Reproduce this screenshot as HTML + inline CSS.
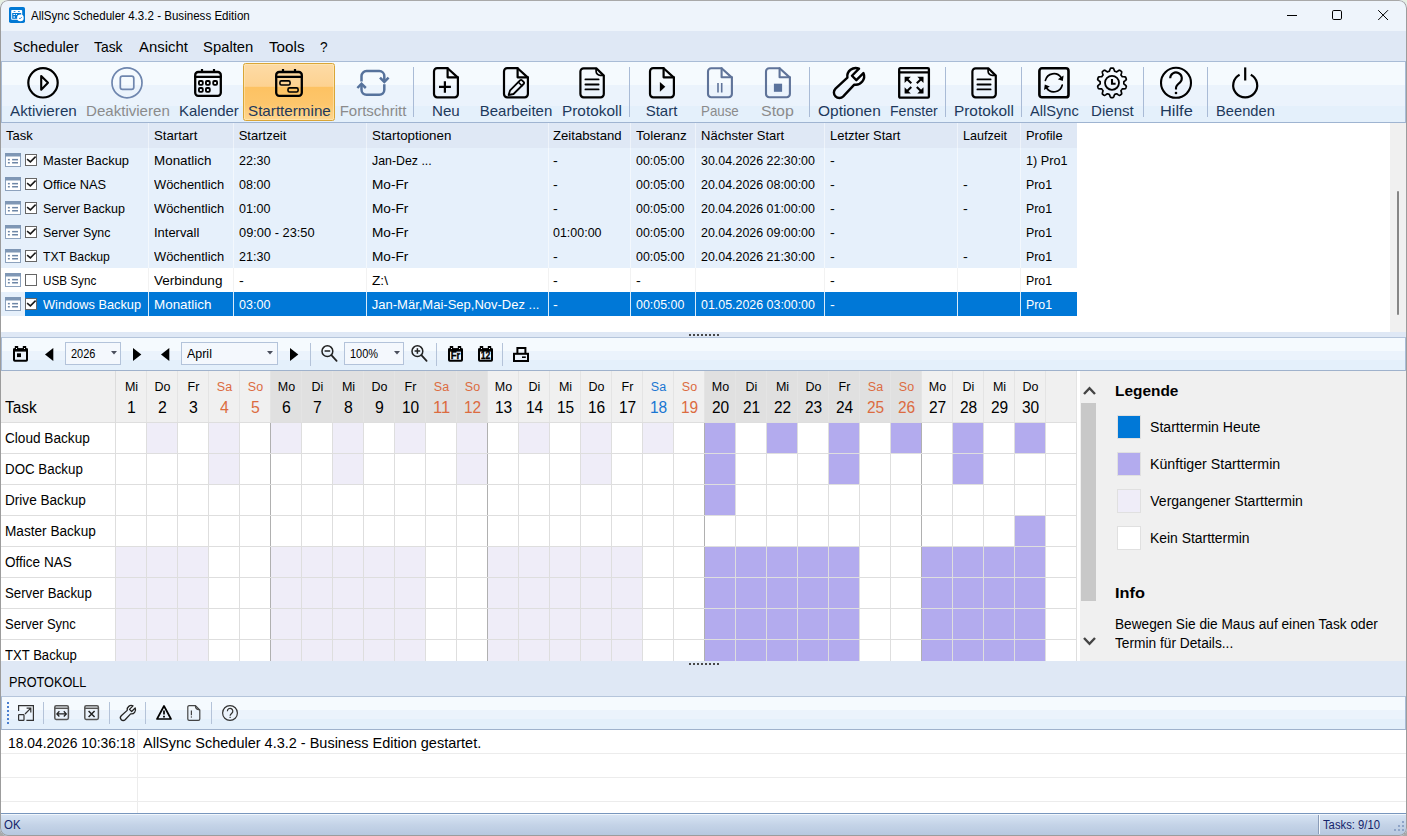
<!DOCTYPE html>
<html lang="de"><head><meta charset="utf-8"><title>AllSync Scheduler 4.3.2 - Business Edition</title>
<style>
html,body{margin:0;padding:0;background:linear-gradient(#e6efe1 0,#e6efe1 50%,#a9a9a9 50%,#a9a9a9 100%);}
body{width:1407px;height:836px;overflow:hidden;font-family:"Liberation Sans",sans-serif;}
#win{position:absolute;left:0;top:0;width:1407px;height:836px;overflow:hidden;background:#dfe8f5;border-radius:8px;}
.t{position:absolute;white-space:pre;line-height:1;transform-origin:0 50%;font-family:"Liberation Sans",sans-serif;}
div{box-sizing:border-box;}
svg{position:absolute;overflow:visible;}

</style></head>
<body>
<div id="win">

<!-- title bar -->
<div style="position:absolute;left:0px;top:0px;width:1407px;height:31px;background:#eef4fb;"></div><svg style="left:9px;top:7px" width="16" height="16" viewBox="0 0 16 16"><rect x="0" y="0" width="16" height="16" rx="1.8" fill="#0078d4"/><rect x="2.2" y="3" width="11" height="9.8" rx="0.8" fill="#fff"/><rect x="3.2" y="6" width="9" height="5.8" fill="#0078d4"/><rect x="4.6" y="4" width="1.8" height="0.9" fill="#2b8be0"/><rect x="9" y="4" width="1.8" height="0.9" fill="#2b8be0"/><rect x="4.4" y="7" width="1.6" height="1" fill="#fff"/><rect x="6.8" y="7" width="1.2" height="1" fill="#fff"/><rect x="4.4" y="9" width="1.6" height="2" fill="#9cc8f0"/><circle cx="11.4" cy="10.9" r="3.3" fill="#fff"/><path d="M10 11l1 0.9l1.8-1.9" fill="none" stroke="#2b8be0" stroke-width="0.9"/></svg><svg style="left:1287px;top:15px" width="10" height="1" viewBox="0 0 10 1"><rect x="0" y="0" width="10" height="1" fill="#000"/></svg><svg style="left:1332px;top:10px" width="10" height="10" viewBox="0 0 10 10"><rect x="0.5" y="0.5" width="9" height="9" rx="1.3" fill="none" stroke="#000" stroke-width="1"/></svg><svg style="left:1378px;top:10px" width="10" height="10" viewBox="0 0 10 10"><path d="M0.2 0.2L10 10M10 0.2L0.2 10" fill="none" stroke="#000" stroke-width="1"/></svg>
<!-- menu bar -->
<div style="position:absolute;left:0px;top:31px;width:1407px;height:31px;background:#dfe8f5;"></div>
<!-- toolbar -->
<div style="position:absolute;left:1px;top:61px;width:1405px;height:62px;border:1px solid #a9bcd6;border-bottom-color:#9fb4d1;background:linear-gradient(#f5fafe 0,#f5fafe 23px,#ebf3fc 23px,#ebf3fc 44px,#e4f0fb 44px,#e4f0fb 100%);"></div><div style="position:absolute;left:243px;top:63px;width:92px;height:58px;border:1px solid #d9a537;border-radius:2.5px;box-shadow:inset 0 0 0 1px rgba(255,236,190,0.55);background:linear-gradient(#fddba6 0,#fdd291 40%,#fdc262 41%,#fdc66c 72%,#fed791 100%);"></div><div style="position:absolute;left:413px;top:67px;width:1px;height:50px;background:#a9bbd6;"></div><div style="position:absolute;left:629px;top:67px;width:1px;height:50px;background:#a9bbd6;"></div><div style="position:absolute;left:809px;top:67px;width:1px;height:50px;background:#a9bbd6;"></div><div style="position:absolute;left:945px;top:67px;width:1px;height:50px;background:#a9bbd6;"></div><div style="position:absolute;left:1021px;top:67px;width:1px;height:50px;background:#a9bbd6;"></div><div style="position:absolute;left:1143px;top:67px;width:1px;height:50px;background:#a9bbd6;"></div><div style="position:absolute;left:1207px;top:67px;width:1px;height:50px;background:#a9bbd6;"></div><svg style="left:27px;top:67px" width="32" height="32" viewBox="0 0 32 32"><circle cx="16" cy="15.8" r="14.7" fill="none" stroke="#000" stroke-width="2.2" stroke-linecap="round" stroke-linejoin="round"/><path d="M14.2 9V22.7L21 15.8Z" fill="none" stroke="#000" stroke-width="2.1" stroke-linecap="round" stroke-linejoin="round"/></svg><svg style="left:111px;top:67px" width="32" height="32" viewBox="0 0 32 32"><circle cx="16" cy="15.8" r="15" fill="none" stroke="#6f86ae" stroke-width="1.7" stroke-linecap="round" stroke-linejoin="round"/><rect x="9.3" y="9.2" width="13.5" height="13.2" rx="2.2" fill="none" stroke="#6f86ae" stroke-width="1.7" stroke-linecap="round" stroke-linejoin="round"/></svg><svg style="left:192px;top:67px" width="32" height="32" viewBox="0 0 32 32"><rect x="3.2" y="5" width="25.6" height="23.8" rx="3" fill="none" stroke="#000" stroke-width="2.3" stroke-linecap="round" stroke-linejoin="round"/><path d="M3.2 9.8H28.8" fill="none" stroke="#000" stroke-width="2.2" stroke-linecap="round" stroke-linejoin="round"/><path d="M10 2V5M22 2V5" fill="none" stroke="#000" stroke-width="2.2" stroke-linecap="butt" stroke-linejoin="round"/><rect x="6.95" y="14.05" width="3.8" height="3.8" rx="1" fill="none" stroke="#000" stroke-width="1.9" stroke-linecap="round" stroke-linejoin="round"/><rect x="13.95" y="14.05" width="3.8" height="3.8" rx="1" fill="none" stroke="#000" stroke-width="1.9" stroke-linecap="round" stroke-linejoin="round"/><rect x="21.25" y="14.05" width="3.8" height="3.8" rx="1" fill="none" stroke="#000" stroke-width="1.9" stroke-linecap="round" stroke-linejoin="round"/><rect x="6.95" y="21.05" width="3.8" height="3.8" rx="1" fill="none" stroke="#000" stroke-width="1.9" stroke-linecap="round" stroke-linejoin="round"/><rect x="13.95" y="21.05" width="3.8" height="3.8" rx="1" fill="none" stroke="#000" stroke-width="1.9" stroke-linecap="round" stroke-linejoin="round"/></svg><svg style="left:273px;top:67px" width="32" height="32" viewBox="0 0 32 32"><rect x="3.2" y="5" width="25.6" height="23.8" rx="3" fill="none" stroke="#000" stroke-width="2.3" stroke-linecap="round" stroke-linejoin="round"/><path d="M3.2 9.8H28.8" fill="none" stroke="#000" stroke-width="2.2" stroke-linecap="round" stroke-linejoin="round"/><path d="M10 2V5M22 2V5" fill="none" stroke="#000" stroke-width="2.2" stroke-linecap="butt" stroke-linejoin="round"/><rect x="6.9" y="13.9" width="10.2" height="4.1" rx="1.5" fill="none" stroke="#000" stroke-width="1.6" stroke-linecap="round" stroke-linejoin="round"/><rect x="15" y="20.9" width="10.1" height="4.1" rx="1.5" fill="none" stroke="#000" stroke-width="1.6" stroke-linecap="round" stroke-linejoin="round"/></svg><svg style="left:357px;top:67px" width="32" height="32" viewBox="0 0 32 32"><path d="M4.5 14.6V9.1a5 5 0 0 1 5-5H22.3a5 5 0 0 1 5 5V14.5" fill="none" stroke="#56729c" stroke-width="2.5" stroke-linecap="butt" stroke-linejoin="miter"/><path d="M23 10.7L27.3 15L31.6 10.7" fill="none" stroke="#56729c" stroke-width="2.5" stroke-linecap="butt" stroke-linejoin="miter"/><path d="M27.3 17.2V22.8a5 5 0 0 1-5 5H9.5a5 5 0 0 1-5-5V17" fill="none" stroke="#56729c" stroke-width="2.5" stroke-linecap="butt" stroke-linejoin="miter"/><path d="M0.4 21L4.5 16.8L8.8 21" fill="none" stroke="#56729c" stroke-width="2.5" stroke-linecap="butt" stroke-linejoin="miter"/></svg><svg style="left:430px;top:67px" width="32" height="32" viewBox="0 0 32 32"><path d="M7.2 1.2H17.6L27.9 10.600000000000001V27.1a3.2 3.2 0 0 1 -3.2 3.2H7.2a3.2 3.2 0 0 1 -3.2 -3.2V4.4a3.2 3.2 0 0 1 3.2 -3.2Z" fill="none" stroke="#000" stroke-width="2.2" stroke-linecap="round" stroke-linejoin="round"/><path d="M17.6 1.2V10.3H27.9" fill="none" stroke="#000" stroke-width="2.2" stroke-linecap="round" stroke-linejoin="round"/><path d="M9 19.8H20.9M14.9 14.2V25.7" fill="none" stroke="#000" stroke-width="2.2" stroke-linecap="butt" stroke-linejoin="round"/></svg><svg style="left:500px;top:67px" width="32" height="32" viewBox="0 0 32 32"><path d="M7.2 1.2H17.6L27.9 10.600000000000001V27.1a3.2 3.2 0 0 1 -3.2 3.2H7.2a3.2 3.2 0 0 1 -3.2 -3.2V4.4a3.2 3.2 0 0 1 3.2 -3.2Z" fill="none" stroke="#000" stroke-width="2.2" stroke-linecap="round" stroke-linejoin="round"/><path d="M17.6 1.2V10.3H27.9" fill="none" stroke="#000" stroke-width="2.2" stroke-linecap="round" stroke-linejoin="round"/><path d="M8.6 28l1.5-4.7L20 13.4a1.5 1.5 0 0 1 2.1 0l1.5 1.5a1.5 1.5 0 0 1 0 2.1L13.5 27Z" fill="#f2f7fd" stroke="#000" stroke-width="1.8" stroke-linejoin="round"/><path d="M18.4 15.2l3.5 3.5" fill="none" stroke="#000" stroke-width="1.6" stroke-linecap="round" stroke-linejoin="round"/></svg><svg style="left:576.3px;top:67px" width="32" height="32" viewBox="0 0 32 32"><path d="M7.6000000000000005 1.3H20.3L27.8 8.6V27.1a3.2 3.2 0 0 1 -3.2 3.2H7.6000000000000005a3.2 3.2 0 0 1 -3.2 -3.2V4.5a3.2 3.2 0 0 1 3.2 -3.2Z" fill="none" stroke="#000" stroke-width="2.2" stroke-linecap="round" stroke-linejoin="round"/><path d="M20.1 1.6V4.2a4.2 4.2 0 0 0 4.2 4.2H27.4" fill="none" stroke="#000" stroke-width="1.7" stroke-linecap="round" stroke-linejoin="round"/><path d="M9.4 12.4H22.6M9.4 17.5H22.6M9.4 22.4H22.6" fill="none" stroke="#000" stroke-width="1.8" stroke-linecap="round" stroke-linejoin="round"/></svg><svg style="left:646px;top:67px" width="32" height="32" viewBox="0 0 32 32"><path d="M7.2 1.2H17.6L27.9 10.600000000000001V27.1a3.2 3.2 0 0 1 -3.2 3.2H7.2a3.2 3.2 0 0 1 -3.2 -3.2V4.4a3.2 3.2 0 0 1 3.2 -3.2Z" fill="none" stroke="#000" stroke-width="2.2" stroke-linecap="round" stroke-linejoin="round"/><path d="M17.6 1.2V10.3H27.9" fill="none" stroke="#000" stroke-width="2.2" stroke-linecap="round" stroke-linejoin="round"/><path d="M13.9 14.9V24.8L19.3 19.8Z" fill="#000"/></svg><svg style="left:704.3px;top:67px" width="32" height="32" viewBox="0 0 32 32"><path d="M7.2 1.2H17.6L27.9 10.600000000000001V27.1a3.2 3.2 0 0 1 -3.2 3.2H7.2a3.2 3.2 0 0 1 -3.2 -3.2V4.4a3.2 3.2 0 0 1 3.2 -3.2Z" fill="none" stroke="#5f7399" stroke-width="2.1" stroke-linecap="round" stroke-linejoin="round"/><path d="M17.6 1.2V10.3H27.9" fill="none" stroke="#5f7399" stroke-width="2.1" stroke-linecap="round" stroke-linejoin="round"/><path d="M14 16.1V25.5M17.7 16.1V25.5" fill="none" stroke="#5f7399" stroke-width="1.6" stroke-linecap="butt" stroke-linejoin="round"/></svg><svg style="left:762px;top:67px" width="32" height="32" viewBox="0 0 32 32"><path d="M7.2 1.2H17.6L27.9 10.600000000000001V27.1a3.2 3.2 0 0 1 -3.2 3.2H7.2a3.2 3.2 0 0 1 -3.2 -3.2V4.4a3.2 3.2 0 0 1 3.2 -3.2Z" fill="none" stroke="#5f7399" stroke-width="2.1" stroke-linecap="round" stroke-linejoin="round"/><path d="M17.6 1.2V10.3H27.9" fill="none" stroke="#5f7399" stroke-width="2.1" stroke-linecap="round" stroke-linejoin="round"/><rect x="11.9" y="16.7" width="8.2" height="8.1" fill="#5a729c"/></svg><svg style="left:833px;top:67px" width="32" height="32" viewBox="0 0 32 32"><path d="M26.03 1.69L18.95 8.76L23.34 13.15L30.41 6.07A8.4 8.4 0 0 1 21.29 17.68L10.27 29.41A5.5 5.5 0 0 1 2.53 21.59L14.40 10.71A8.4 8.4 0 0 1 26.03 1.69Z" fill="none" stroke="#000" stroke-width="2.4" stroke-linecap="round" stroke-linejoin="round"/></svg><svg style="left:898px;top:67px" width="32" height="32" viewBox="0 0 32 32"><rect x="1.2" y="1.2" width="29.7" height="29.5" rx="1" fill="none" stroke="#000" stroke-width="2.3" stroke-linecap="round" stroke-linejoin="round"/><path d="M1.2 5.3H30.9" fill="none" stroke="#000" stroke-width="2.2" stroke-linecap="round" stroke-linejoin="round"/><g transform="translate(6.8,10) scale(1,1)"><path d="M6.5 6.3L0.8 0.8" fill="none" stroke="#000" stroke-width="2.1" stroke-linecap="butt" stroke-linejoin="round"/><path d="M-0.2 -0.2H6L-0.2 6Z" fill="#000"/></g><g transform="translate(25.3,10) scale(-1,1)"><path d="M6.5 6.3L0.8 0.8" fill="none" stroke="#000" stroke-width="2.1" stroke-linecap="butt" stroke-linejoin="round"/><path d="M-0.2 -0.2H6L-0.2 6Z" fill="#000"/></g><g transform="translate(6.8,26.2) scale(1,-1)"><path d="M6.5 6.3L0.8 0.8" fill="none" stroke="#000" stroke-width="2.1" stroke-linecap="butt" stroke-linejoin="round"/><path d="M-0.2 -0.2H6L-0.2 6Z" fill="#000"/></g><g transform="translate(25.3,26.2) scale(-1,-1)"><path d="M6.5 6.3L0.8 0.8" fill="none" stroke="#000" stroke-width="2.1" stroke-linecap="butt" stroke-linejoin="round"/><path d="M-0.2 -0.2H6L-0.2 6Z" fill="#000"/></g></svg><svg style="left:968px;top:67px" width="32" height="32" viewBox="0 0 32 32"><path d="M7.6000000000000005 1.3H20.3L27.8 8.6V27.1a3.2 3.2 0 0 1 -3.2 3.2H7.6000000000000005a3.2 3.2 0 0 1 -3.2 -3.2V4.5a3.2 3.2 0 0 1 3.2 -3.2Z" fill="none" stroke="#000" stroke-width="2.2" stroke-linecap="round" stroke-linejoin="round"/><path d="M20.1 1.6V4.2a4.2 4.2 0 0 0 4.2 4.2H27.4" fill="none" stroke="#000" stroke-width="1.7" stroke-linecap="round" stroke-linejoin="round"/><path d="M9.4 12.4H22.6M9.4 17.5H22.6M9.4 22.4H22.6" fill="none" stroke="#000" stroke-width="1.8" stroke-linecap="round" stroke-linejoin="round"/></svg><svg style="left:1038px;top:67px" width="32" height="32" viewBox="0 0 32 32"><rect x="1.4" y="1.3" width="29.1" height="29" rx="2.6" fill="none" stroke="#000" stroke-width="2.6" stroke-linecap="round" stroke-linejoin="round"/><path d="M7.4 13.4a8.7 8.7 0 0 1 15.8-2.6M24.2 18.2a8.7 8.7 0 0 1-15.8 2.6" fill="none" stroke="#000" stroke-width="1.7" stroke-linecap="round" stroke-linejoin="round"/><path d="M25.6 8.6L24.8 14L19.8 12.2Z" fill="#000"/><path d="M6 23L6.8 17.6L11.8 19.4Z" fill="#000"/></svg><svg style="left:1096px;top:67px" width="32" height="32" viewBox="0 0 32 32"><path d="M16.00 1.05L16.39 1.06L16.77 1.07L17.16 1.10L17.51 1.42L17.81 2.02L18.08 2.66L18.31 3.31L18.52 3.93L18.77 4.28L19.07 4.35L19.37 4.44L19.66 4.53L19.96 4.63L20.25 4.74L20.53 4.85L20.94 4.71L21.47 4.34L22.04 3.95L22.63 3.58L23.23 3.28L23.71 3.22L24.03 3.43L24.35 3.64L24.67 3.87L24.98 4.10L25.28 4.34L25.58 4.58L25.68 5.05L25.57 5.72L25.40 6.40L25.21 7.06L25.02 7.68L25.01 8.10L25.21 8.34L25.40 8.59L25.59 8.83L25.77 9.09L25.94 9.35L26.10 9.61L26.51 9.73L27.16 9.74L27.85 9.76L28.55 9.82L29.21 9.92L29.63 10.16L29.77 10.51L29.90 10.88L30.03 11.24L30.14 11.61L30.25 11.98L30.34 12.36L30.14 12.79L29.67 13.27L29.14 13.72L28.59 14.14L28.07 14.53L27.81 14.87L27.83 15.18L27.85 15.49L27.85 15.80L27.85 16.11L27.83 16.42L27.81 16.73L28.07 17.07L28.59 17.46L29.14 17.88L29.67 18.33L30.14 18.81L30.34 19.24L30.25 19.62L30.14 19.99L30.03 20.36L29.90 20.72L29.77 21.09L29.63 21.44L29.21 21.68L28.55 21.78L27.85 21.84L27.16 21.86L26.51 21.87L26.10 21.99L25.94 22.25L25.77 22.51L25.59 22.77L25.40 23.01L25.21 23.26L25.01 23.50L25.02 23.92L25.21 24.54L25.40 25.20L25.57 25.88L25.68 26.55L25.58 27.02L25.28 27.26L24.98 27.50L24.67 27.73L24.35 27.96L24.03 28.17L23.71 28.38L23.23 28.32L22.63 28.02L22.04 27.65L21.47 27.26L20.94 26.89L20.53 26.75L20.25 26.86L19.96 26.97L19.66 27.07L19.37 27.16L19.07 27.25L18.77 27.32L18.52 27.67L18.31 28.29L18.08 28.94L17.81 29.58L17.51 30.18L17.16 30.50L16.77 30.53L16.39 30.54L16.00 30.55L15.61 30.54L15.23 30.53L14.84 30.50L14.49 30.18L14.19 29.58L13.92 28.94L13.69 28.29L13.48 27.67L13.23 27.32L12.93 27.25L12.63 27.16L12.34 27.07L12.04 26.97L11.75 26.86L11.47 26.75L11.06 26.89L10.53 27.26L9.96 27.65L9.37 28.02L8.77 28.32L8.29 28.38L7.97 28.17L7.65 27.96L7.33 27.73L7.02 27.50L6.72 27.26L6.42 27.02L6.32 26.55L6.43 25.88L6.60 25.20L6.79 24.54L6.98 23.92L6.99 23.50L6.79 23.26L6.60 23.01L6.41 22.77L6.23 22.51L6.06 22.25L5.90 21.99L5.49 21.87L4.84 21.86L4.15 21.84L3.45 21.78L2.79 21.68L2.37 21.44L2.23 21.09L2.10 20.72L1.97 20.36L1.86 19.99L1.75 19.62L1.66 19.24L1.86 18.81L2.33 18.33L2.86 17.88L3.41 17.46L3.93 17.07L4.19 16.73L4.17 16.42L4.15 16.11L4.15 15.80L4.15 15.49L4.17 15.18L4.19 14.87L3.93 14.53L3.41 14.14L2.86 13.72L2.33 13.27L1.86 12.79L1.66 12.36L1.75 11.98L1.86 11.61L1.97 11.24L2.10 10.88L2.23 10.51L2.37 10.16L2.79 9.92L3.45 9.82L4.15 9.76L4.84 9.74L5.49 9.73L5.90 9.61L6.06 9.35L6.23 9.09L6.41 8.83L6.60 8.59L6.79 8.34L6.99 8.10L6.98 7.68L6.79 7.06L6.60 6.40L6.43 5.72L6.32 5.05L6.42 4.58L6.72 4.34L7.02 4.10L7.33 3.87L7.65 3.64L7.97 3.43L8.29 3.22L8.77 3.28L9.37 3.58L9.96 3.95L10.53 4.34L11.06 4.71L11.47 4.85L11.75 4.74L12.04 4.63L12.34 4.53L12.63 4.44L12.93 4.35L13.23 4.28L13.48 3.93L13.69 3.31L13.92 2.66L14.19 2.02L14.49 1.42L14.84 1.10L15.23 1.07L15.61 1.06Z" fill="none" stroke="#000" stroke-width="1.7" stroke-linecap="round" stroke-linejoin="round"/><circle cx="16" cy="15.8" r="7" fill="none" stroke="#000" stroke-width="1.8" stroke-linecap="round" stroke-linejoin="round"/><path d="M16 12V16.8H19.6" fill="none" stroke="#000" stroke-width="2.1" stroke-linecap="butt" stroke-linejoin="miter"/></svg><svg style="left:1160px;top:67px" width="32" height="32" viewBox="0 0 32 32"><circle cx="16" cy="15.8" r="15" fill="none" stroke="#000" stroke-width="2.1" stroke-linecap="round" stroke-linejoin="round"/><path d="M10.2 11.2a5.8 5.8 0 1 1 9.6 4.4c-2.4 1.9-3.8 3-3.8 5.4V22.4" fill="none" stroke="#000" stroke-width="2.1" stroke-linecap="butt" stroke-linejoin="round"/><circle cx="16" cy="26" r="1.3" fill="#000"/></svg><svg style="left:1229px;top:67px" width="32" height="32" viewBox="0 0 32 32"><path d="M16.2 0.4V13.5" fill="none" stroke="#000" stroke-width="2.2" stroke-linecap="butt" stroke-linejoin="round"/><path d="M10.6 7.8a12 12 0 1 0 11.2 0" fill="none" stroke="#000" stroke-width="2.2" stroke-linecap="butt" stroke-linejoin="round"/></svg>
<!-- task table -->
<div style="position:absolute;left:1px;top:123px;width:1389px;height:209px;background:#fff;"></div><div style="position:absolute;left:1390px;top:123px;width:16px;height:209px;background:#f0f0f0;"></div><div style="position:absolute;left:1397px;top:191px;width:2px;height:124px;background:#868686;border-radius:1px;"></div><div style="position:absolute;left:1px;top:123px;width:1076px;height:25px;background:#dfe8f5;"></div><div style="position:absolute;left:1px;top:148px;width:1076px;height:120px;background:#e6f0fb;"></div><div style="position:absolute;left:1px;top:292px;width:24px;height:24px;background:#e6f0fb;"></div><div style="position:absolute;left:25px;top:292px;width:1052px;height:24px;background:#0078d7;"></div><div style="position:absolute;left:148px;top:123px;width:1px;height:25px;background:#eef3fa;"></div><div style="position:absolute;left:148px;top:148px;width:1px;height:120px;background:#f3f8fd;"></div><div style="position:absolute;left:148px;top:268px;width:1px;height:24px;background:#f2f2f2;"></div><div style="position:absolute;left:148px;top:292px;width:1px;height:24px;background:#d9ebf9;"></div><div style="position:absolute;left:233px;top:123px;width:1px;height:25px;background:#eef3fa;"></div><div style="position:absolute;left:233px;top:148px;width:1px;height:120px;background:#f3f8fd;"></div><div style="position:absolute;left:233px;top:268px;width:1px;height:24px;background:#f2f2f2;"></div><div style="position:absolute;left:233px;top:292px;width:1px;height:24px;background:#d9ebf9;"></div><div style="position:absolute;left:366px;top:123px;width:1px;height:25px;background:#eef3fa;"></div><div style="position:absolute;left:366px;top:148px;width:1px;height:120px;background:#f3f8fd;"></div><div style="position:absolute;left:366px;top:268px;width:1px;height:24px;background:#f2f2f2;"></div><div style="position:absolute;left:366px;top:292px;width:1px;height:24px;background:#d9ebf9;"></div><div style="position:absolute;left:548px;top:123px;width:1px;height:25px;background:#eef3fa;"></div><div style="position:absolute;left:548px;top:148px;width:1px;height:120px;background:#f3f8fd;"></div><div style="position:absolute;left:548px;top:268px;width:1px;height:24px;background:#f2f2f2;"></div><div style="position:absolute;left:548px;top:292px;width:1px;height:24px;background:#d9ebf9;"></div><div style="position:absolute;left:630px;top:123px;width:1px;height:25px;background:#eef3fa;"></div><div style="position:absolute;left:630px;top:148px;width:1px;height:120px;background:#f3f8fd;"></div><div style="position:absolute;left:630px;top:268px;width:1px;height:24px;background:#f2f2f2;"></div><div style="position:absolute;left:630px;top:292px;width:1px;height:24px;background:#d9ebf9;"></div><div style="position:absolute;left:695px;top:123px;width:1px;height:25px;background:#eef3fa;"></div><div style="position:absolute;left:695px;top:148px;width:1px;height:120px;background:#f3f8fd;"></div><div style="position:absolute;left:695px;top:268px;width:1px;height:24px;background:#f2f2f2;"></div><div style="position:absolute;left:695px;top:292px;width:1px;height:24px;background:#d9ebf9;"></div><div style="position:absolute;left:824px;top:123px;width:1px;height:25px;background:#eef3fa;"></div><div style="position:absolute;left:824px;top:148px;width:1px;height:120px;background:#f3f8fd;"></div><div style="position:absolute;left:824px;top:268px;width:1px;height:24px;background:#f2f2f2;"></div><div style="position:absolute;left:824px;top:292px;width:1px;height:24px;background:#d9ebf9;"></div><div style="position:absolute;left:957px;top:123px;width:1px;height:25px;background:#eef3fa;"></div><div style="position:absolute;left:957px;top:148px;width:1px;height:120px;background:#f3f8fd;"></div><div style="position:absolute;left:957px;top:268px;width:1px;height:24px;background:#f2f2f2;"></div><div style="position:absolute;left:957px;top:292px;width:1px;height:24px;background:#d9ebf9;"></div><div style="position:absolute;left:1020px;top:123px;width:1px;height:25px;background:#eef3fa;"></div><div style="position:absolute;left:1020px;top:148px;width:1px;height:120px;background:#f3f8fd;"></div><div style="position:absolute;left:1020px;top:268px;width:1px;height:24px;background:#f2f2f2;"></div><div style="position:absolute;left:1020px;top:292px;width:1px;height:24px;background:#d9ebf9;"></div><svg style="left:5px;top:153px" width="16" height="14" viewBox="0 0 16 14"><rect x="0.5" y="0.5" width="15" height="13" fill="#fff" stroke="#8da2bd"/><rect x="0" y="0" width="16" height="3.5" fill="#7f97b5"/><rect x="2.9" y="5.9" width="1.9" height="1.5" fill="#6d86a6"/><rect x="7.1" y="5.9" width="5.9" height="1.5" fill="#6d86a6"/><rect x="2.9" y="9" width="1.9" height="1.5" fill="#6d86a6"/><rect x="7.1" y="9" width="5.9" height="1.5" fill="#6d86a6"/></svg><svg style="left:25px;top:154px" width="12" height="12" viewBox="0 0 12 12"><rect x="0.5" y="0.5" width="11" height="11" fill="#fff" stroke="#666"/><path d="M2.1 5.2 L5.4 7.9 L10.6 2.6" fill="none" stroke="#1a1a1a" stroke-width="1.5"/></svg><svg style="left:5px;top:177px" width="16" height="14" viewBox="0 0 16 14"><rect x="0.5" y="0.5" width="15" height="13" fill="#fff" stroke="#8da2bd"/><rect x="0" y="0" width="16" height="3.5" fill="#7f97b5"/><rect x="2.9" y="5.9" width="1.9" height="1.5" fill="#6d86a6"/><rect x="7.1" y="5.9" width="5.9" height="1.5" fill="#6d86a6"/><rect x="2.9" y="9" width="1.9" height="1.5" fill="#6d86a6"/><rect x="7.1" y="9" width="5.9" height="1.5" fill="#6d86a6"/></svg><svg style="left:25px;top:178px" width="12" height="12" viewBox="0 0 12 12"><rect x="0.5" y="0.5" width="11" height="11" fill="#fff" stroke="#666"/><path d="M2.1 5.2 L5.4 7.9 L10.6 2.6" fill="none" stroke="#1a1a1a" stroke-width="1.5"/></svg><svg style="left:5px;top:201px" width="16" height="14" viewBox="0 0 16 14"><rect x="0.5" y="0.5" width="15" height="13" fill="#fff" stroke="#8da2bd"/><rect x="0" y="0" width="16" height="3.5" fill="#7f97b5"/><rect x="2.9" y="5.9" width="1.9" height="1.5" fill="#6d86a6"/><rect x="7.1" y="5.9" width="5.9" height="1.5" fill="#6d86a6"/><rect x="2.9" y="9" width="1.9" height="1.5" fill="#6d86a6"/><rect x="7.1" y="9" width="5.9" height="1.5" fill="#6d86a6"/></svg><svg style="left:25px;top:202px" width="12" height="12" viewBox="0 0 12 12"><rect x="0.5" y="0.5" width="11" height="11" fill="#fff" stroke="#666"/><path d="M2.1 5.2 L5.4 7.9 L10.6 2.6" fill="none" stroke="#1a1a1a" stroke-width="1.5"/></svg><svg style="left:5px;top:225px" width="16" height="14" viewBox="0 0 16 14"><rect x="0.5" y="0.5" width="15" height="13" fill="#fff" stroke="#8da2bd"/><rect x="0" y="0" width="16" height="3.5" fill="#7f97b5"/><rect x="2.9" y="5.9" width="1.9" height="1.5" fill="#6d86a6"/><rect x="7.1" y="5.9" width="5.9" height="1.5" fill="#6d86a6"/><rect x="2.9" y="9" width="1.9" height="1.5" fill="#6d86a6"/><rect x="7.1" y="9" width="5.9" height="1.5" fill="#6d86a6"/></svg><svg style="left:25px;top:226px" width="12" height="12" viewBox="0 0 12 12"><rect x="0.5" y="0.5" width="11" height="11" fill="#fff" stroke="#666"/><path d="M2.1 5.2 L5.4 7.9 L10.6 2.6" fill="none" stroke="#1a1a1a" stroke-width="1.5"/></svg><svg style="left:5px;top:249px" width="16" height="14" viewBox="0 0 16 14"><rect x="0.5" y="0.5" width="15" height="13" fill="#fff" stroke="#8da2bd"/><rect x="0" y="0" width="16" height="3.5" fill="#7f97b5"/><rect x="2.9" y="5.9" width="1.9" height="1.5" fill="#6d86a6"/><rect x="7.1" y="5.9" width="5.9" height="1.5" fill="#6d86a6"/><rect x="2.9" y="9" width="1.9" height="1.5" fill="#6d86a6"/><rect x="7.1" y="9" width="5.9" height="1.5" fill="#6d86a6"/></svg><svg style="left:25px;top:250px" width="12" height="12" viewBox="0 0 12 12"><rect x="0.5" y="0.5" width="11" height="11" fill="#fff" stroke="#666"/><path d="M2.1 5.2 L5.4 7.9 L10.6 2.6" fill="none" stroke="#1a1a1a" stroke-width="1.5"/></svg><svg style="left:5px;top:273px" width="16" height="14" viewBox="0 0 16 14"><rect x="0.5" y="0.5" width="15" height="13" fill="#fff" stroke="#8da2bd"/><rect x="0" y="0" width="16" height="3.5" fill="#7f97b5"/><rect x="2.9" y="5.9" width="1.9" height="1.5" fill="#6d86a6"/><rect x="7.1" y="5.9" width="5.9" height="1.5" fill="#6d86a6"/><rect x="2.9" y="9" width="1.9" height="1.5" fill="#6d86a6"/><rect x="7.1" y="9" width="5.9" height="1.5" fill="#6d86a6"/></svg><svg style="left:25px;top:274px" width="12" height="12" viewBox="0 0 12 12"><rect x="0.5" y="0.5" width="11" height="11" fill="#fff" stroke="#666"/></svg><svg style="left:5px;top:297px" width="16" height="14" viewBox="0 0 16 14"><rect x="0.5" y="0.5" width="15" height="13" fill="#fff" stroke="#8da2bd"/><rect x="0" y="0" width="16" height="3.5" fill="#7f97b5"/><rect x="2.9" y="5.9" width="1.9" height="1.5" fill="#6d86a6"/><rect x="7.1" y="5.9" width="5.9" height="1.5" fill="#6d86a6"/><rect x="2.9" y="9" width="1.9" height="1.5" fill="#6d86a6"/><rect x="7.1" y="9" width="5.9" height="1.5" fill="#6d86a6"/></svg><svg style="left:25px;top:298px" width="12" height="12" viewBox="0 0 12 12"><rect x="0.5" y="0.5" width="11" height="11" fill="#fff" stroke="#666"/><path d="M2.1 5.2 L5.4 7.9 L10.6 2.6" fill="none" stroke="#1a1a1a" stroke-width="1.5"/></svg><div style="position:absolute;left:689px;top:334px;width:2px;height:2px;background:#484848;"></div><div style="position:absolute;left:693px;top:334px;width:2px;height:2px;background:#484848;"></div><div style="position:absolute;left:697px;top:334px;width:2px;height:2px;background:#484848;"></div><div style="position:absolute;left:701px;top:334px;width:2px;height:2px;background:#484848;"></div><div style="position:absolute;left:705px;top:334px;width:2px;height:2px;background:#484848;"></div><div style="position:absolute;left:709px;top:334px;width:2px;height:2px;background:#484848;"></div><div style="position:absolute;left:713px;top:334px;width:2px;height:2px;background:#484848;"></div><div style="position:absolute;left:717px;top:334px;width:2px;height:2px;background:#484848;"></div>
<!-- calendar toolbar -->
<div style="position:absolute;left:1px;top:337px;width:1405px;height:34px;border:1px solid #a9bcd6;border-top-color:#b5c5db;border-bottom-color:#9fb2cc;background:linear-gradient(#f5fafe 0,#f5fafe 13px,#ebf3fc 13px,#ebf3fc 22px,#e4f0fb 22px,#e4f0fb 100%);"></div><div style="position:absolute;left:65px;top:342px;width:56px;height:23px;border:1px solid #b3c3da;background:#f4f8fd;"></div><svg style="left:111px;top:350.7px" width="6" height="4" viewBox="0 0 6 4"><path d="M0 0H6L3 3.4Z" fill="#4a4f5c"/></svg><div style="position:absolute;left:181px;top:342px;width:97px;height:23px;border:1px solid #b3c3da;background:#f4f8fd;"></div><svg style="left:267px;top:350.7px" width="6" height="4" viewBox="0 0 6 4"><path d="M0 0H6L3 3.4Z" fill="#4a4f5c"/></svg><div style="position:absolute;left:344px;top:342px;width:60px;height:23px;border:1px solid #b3c3da;background:#f4f8fd;"></div><svg style="left:393.5px;top:350.7px" width="6" height="4" viewBox="0 0 6 4"><path d="M0 0H6L3 3.4Z" fill="#4a4f5c"/></svg><div style="position:absolute;left:310px;top:343px;width:1px;height:23px;background:#b4c3d9;"></div><div style="position:absolute;left:436px;top:343px;width:1px;height:23px;background:#b4c3d9;"></div><div style="position:absolute;left:502px;top:343px;width:1px;height:23px;background:#b4c3d9;"></div><svg style="left:45px;top:347.90000000000003px" width="9" height="13" viewBox="0 0 9 13"><path d="M8.3 0V13L0 6.5Z" fill="#000"/></svg><svg style="left:132.7px;top:347.90000000000003px" width="9" height="13" viewBox="0 0 9 13"><path d="M0 0V13L8.3 6.5Z" fill="#000"/></svg><svg style="left:160.7px;top:347.90000000000003px" width="9" height="13" viewBox="0 0 9 13"><path d="M8.3 0V13L0 6.5Z" fill="#000"/></svg><svg style="left:289.7px;top:347.90000000000003px" width="9" height="13" viewBox="0 0 9 13"><path d="M0 0V13L8.3 6.5Z" fill="#000"/></svg><svg style="left:13px;top:346px" width="15" height="16" viewBox="0 0 15 16"><rect x="1" y="3.2" width="13" height="11.6" rx="0.8" fill="none" stroke="#000" stroke-width="2"/><rect x="0.2" y="2.4" width="14.6" height="3.2" fill="#000"/><rect x="2.4" y="0.6" width="2.2" height="3.6" fill="#fff" stroke="#000" stroke-width="1.2"/><rect x="10.4" y="0.6" width="2.2" height="3.6" fill="#fff" stroke="#000" stroke-width="1.2"/><rect x="4" y="7.3" width="4" height="3.8" fill="#000"/></svg><svg style="left:321px;top:345.4px" width="17" height="17" viewBox="0 0 17 17"><circle cx="6.4" cy="6.2" r="5.4" stroke="#222" fill="none" stroke-width="1.5"/><path d="M10.4 10.2L15.6 15.8" stroke="#222" fill="none" stroke-width="1.8" stroke-linecap="round"/><path d="M3.6 6H9.2" stroke="#222" fill="none" stroke-width="1.5"/></svg><svg style="left:410.6px;top:345.4px" width="17" height="17" viewBox="0 0 17 17"><circle cx="6.4" cy="6.2" r="5.4" stroke="#222" fill="none" stroke-width="1.5"/><path d="M10.4 10.2L15.6 15.8" stroke="#222" fill="none" stroke-width="1.8" stroke-linecap="round"/><path d="M3.6 6H9.2" stroke="#222" fill="none" stroke-width="1.5"/><path d="M6.4 3.2V8.8" stroke="#222" fill="none" stroke-width="1.5"/></svg><svg style="left:448px;top:346px" width="15" height="16" viewBox="0 0 15 16"><rect x="1" y="3.2" width="13" height="11.6" rx="0.8" fill="none" stroke="#000" stroke-width="2"/><rect x="0.2" y="2.4" width="14.6" height="3.2" fill="#000"/><rect x="2.4" y="0.6" width="2.2" height="3.6" fill="#fff" stroke="#000" stroke-width="1.2"/><rect x="10.4" y="0.6" width="2.2" height="3.6" fill="#fff" stroke="#000" stroke-width="1.2"/><text x="7.5" y="13.25" stroke="#000" stroke-width="0.3" text-anchor="middle" font-family="Liberation Sans,sans-serif" font-weight="bold" font-size="10" fill="#000" textLength="9.6" lengthAdjust="spacingAndGlyphs">Fr</text></svg><svg style="left:478px;top:346px" width="15" height="16" viewBox="0 0 15 16"><rect x="1" y="3.2" width="13" height="11.6" rx="0.8" fill="none" stroke="#000" stroke-width="2"/><rect x="0.2" y="2.4" width="14.6" height="3.2" fill="#000"/><rect x="2.4" y="0.6" width="2.2" height="3.6" fill="#fff" stroke="#000" stroke-width="1.2"/><rect x="10.4" y="0.6" width="2.2" height="3.6" fill="#fff" stroke="#000" stroke-width="1.2"/><text x="7.5" y="13.25" stroke="#000" stroke-width="0.3" text-anchor="middle" font-family="Liberation Sans,sans-serif" font-weight="bold" font-size="10" fill="#000" textLength="9.6" lengthAdjust="spacingAndGlyphs">12</text></svg><svg style="left:513px;top:347px" width="16" height="15" viewBox="0 0 16 15"><path d="M4.4 6.6V1H12.4V6.6" fill="none" stroke="#000" stroke-width="2"/><rect x="1" y="6.8" width="14" height="7.2" fill="none" stroke="#000" stroke-width="2"/><rect x="9" y="9.4" width="3.8" height="1.6" fill="#000"/></svg>
<!-- calendar grid -->
<div style="position:absolute;left:1px;top:371px;width:1076px;height:290px;background:#fff;"></div><div style="position:absolute;left:1px;top:371px;width:1076px;height:52px;background:#f0f0f0;"></div><div style="position:absolute;left:270px;top:371px;width:217px;height:52px;background:#e0e0e0;"></div><div style="position:absolute;left:704px;top:371px;width:217px;height:52px;background:#e0e0e0;"></div><div style="position:absolute;left:147px;top:423px;width:30px;height:30px;background:#efedf8;"></div><div style="position:absolute;left:209px;top:423px;width:30px;height:30px;background:#efedf8;"></div><div style="position:absolute;left:271px;top:423px;width:30px;height:30px;background:#efedf8;"></div><div style="position:absolute;left:333px;top:423px;width:30px;height:30px;background:#efedf8;"></div><div style="position:absolute;left:395px;top:423px;width:30px;height:30px;background:#efedf8;"></div><div style="position:absolute;left:457px;top:423px;width:30px;height:30px;background:#efedf8;"></div><div style="position:absolute;left:519px;top:423px;width:30px;height:30px;background:#efedf8;"></div><div style="position:absolute;left:581px;top:423px;width:30px;height:30px;background:#efedf8;"></div><div style="position:absolute;left:643px;top:423px;width:30px;height:30px;background:#efedf8;"></div><div style="position:absolute;left:705px;top:423px;width:30px;height:30px;background:#b3abee;"></div><div style="position:absolute;left:767px;top:423px;width:30px;height:30px;background:#b3abee;"></div><div style="position:absolute;left:829px;top:423px;width:30px;height:30px;background:#b3abee;"></div><div style="position:absolute;left:891px;top:423px;width:30px;height:30px;background:#b3abee;"></div><div style="position:absolute;left:953px;top:423px;width:30px;height:30px;background:#b3abee;"></div><div style="position:absolute;left:1015px;top:423px;width:30px;height:30px;background:#b3abee;"></div><div style="position:absolute;left:209px;top:454px;width:30px;height:30px;background:#efedf8;"></div><div style="position:absolute;left:333px;top:454px;width:30px;height:30px;background:#efedf8;"></div><div style="position:absolute;left:457px;top:454px;width:30px;height:30px;background:#efedf8;"></div><div style="position:absolute;left:581px;top:454px;width:30px;height:30px;background:#efedf8;"></div><div style="position:absolute;left:705px;top:454px;width:30px;height:30px;background:#b3abee;"></div><div style="position:absolute;left:829px;top:454px;width:30px;height:30px;background:#b3abee;"></div><div style="position:absolute;left:953px;top:454px;width:30px;height:30px;background:#b3abee;"></div><div style="position:absolute;left:705px;top:485px;width:30px;height:30px;background:#b3abee;"></div><div style="position:absolute;left:1015px;top:516px;width:30px;height:30px;background:#b3abee;"></div><div style="position:absolute;left:116px;top:547px;width:30px;height:30px;background:#efedf8;"></div><div style="position:absolute;left:147px;top:547px;width:30px;height:30px;background:#efedf8;"></div><div style="position:absolute;left:178px;top:547px;width:30px;height:30px;background:#efedf8;"></div><div style="position:absolute;left:271px;top:547px;width:30px;height:30px;background:#efedf8;"></div><div style="position:absolute;left:302px;top:547px;width:30px;height:30px;background:#efedf8;"></div><div style="position:absolute;left:333px;top:547px;width:30px;height:30px;background:#efedf8;"></div><div style="position:absolute;left:364px;top:547px;width:30px;height:30px;background:#efedf8;"></div><div style="position:absolute;left:395px;top:547px;width:30px;height:30px;background:#efedf8;"></div><div style="position:absolute;left:488px;top:547px;width:30px;height:30px;background:#efedf8;"></div><div style="position:absolute;left:519px;top:547px;width:30px;height:30px;background:#efedf8;"></div><div style="position:absolute;left:550px;top:547px;width:30px;height:30px;background:#efedf8;"></div><div style="position:absolute;left:581px;top:547px;width:30px;height:30px;background:#efedf8;"></div><div style="position:absolute;left:612px;top:547px;width:30px;height:30px;background:#efedf8;"></div><div style="position:absolute;left:705px;top:547px;width:30px;height:30px;background:#b3abee;"></div><div style="position:absolute;left:736px;top:547px;width:30px;height:30px;background:#b3abee;"></div><div style="position:absolute;left:767px;top:547px;width:30px;height:30px;background:#b3abee;"></div><div style="position:absolute;left:798px;top:547px;width:30px;height:30px;background:#b3abee;"></div><div style="position:absolute;left:829px;top:547px;width:30px;height:30px;background:#b3abee;"></div><div style="position:absolute;left:922px;top:547px;width:30px;height:30px;background:#b3abee;"></div><div style="position:absolute;left:953px;top:547px;width:30px;height:30px;background:#b3abee;"></div><div style="position:absolute;left:984px;top:547px;width:30px;height:30px;background:#b3abee;"></div><div style="position:absolute;left:1015px;top:547px;width:30px;height:30px;background:#b3abee;"></div><div style="position:absolute;left:116px;top:578px;width:30px;height:30px;background:#efedf8;"></div><div style="position:absolute;left:147px;top:578px;width:30px;height:30px;background:#efedf8;"></div><div style="position:absolute;left:178px;top:578px;width:30px;height:30px;background:#efedf8;"></div><div style="position:absolute;left:271px;top:578px;width:30px;height:30px;background:#efedf8;"></div><div style="position:absolute;left:302px;top:578px;width:30px;height:30px;background:#efedf8;"></div><div style="position:absolute;left:333px;top:578px;width:30px;height:30px;background:#efedf8;"></div><div style="position:absolute;left:364px;top:578px;width:30px;height:30px;background:#efedf8;"></div><div style="position:absolute;left:395px;top:578px;width:30px;height:30px;background:#efedf8;"></div><div style="position:absolute;left:488px;top:578px;width:30px;height:30px;background:#efedf8;"></div><div style="position:absolute;left:519px;top:578px;width:30px;height:30px;background:#efedf8;"></div><div style="position:absolute;left:550px;top:578px;width:30px;height:30px;background:#efedf8;"></div><div style="position:absolute;left:581px;top:578px;width:30px;height:30px;background:#efedf8;"></div><div style="position:absolute;left:612px;top:578px;width:30px;height:30px;background:#efedf8;"></div><div style="position:absolute;left:705px;top:578px;width:30px;height:30px;background:#b3abee;"></div><div style="position:absolute;left:736px;top:578px;width:30px;height:30px;background:#b3abee;"></div><div style="position:absolute;left:767px;top:578px;width:30px;height:30px;background:#b3abee;"></div><div style="position:absolute;left:798px;top:578px;width:30px;height:30px;background:#b3abee;"></div><div style="position:absolute;left:829px;top:578px;width:30px;height:30px;background:#b3abee;"></div><div style="position:absolute;left:922px;top:578px;width:30px;height:30px;background:#b3abee;"></div><div style="position:absolute;left:953px;top:578px;width:30px;height:30px;background:#b3abee;"></div><div style="position:absolute;left:984px;top:578px;width:30px;height:30px;background:#b3abee;"></div><div style="position:absolute;left:1015px;top:578px;width:30px;height:30px;background:#b3abee;"></div><div style="position:absolute;left:116px;top:609px;width:30px;height:30px;background:#efedf8;"></div><div style="position:absolute;left:147px;top:609px;width:30px;height:30px;background:#efedf8;"></div><div style="position:absolute;left:178px;top:609px;width:30px;height:30px;background:#efedf8;"></div><div style="position:absolute;left:271px;top:609px;width:30px;height:30px;background:#efedf8;"></div><div style="position:absolute;left:302px;top:609px;width:30px;height:30px;background:#efedf8;"></div><div style="position:absolute;left:333px;top:609px;width:30px;height:30px;background:#efedf8;"></div><div style="position:absolute;left:364px;top:609px;width:30px;height:30px;background:#efedf8;"></div><div style="position:absolute;left:395px;top:609px;width:30px;height:30px;background:#efedf8;"></div><div style="position:absolute;left:488px;top:609px;width:30px;height:30px;background:#efedf8;"></div><div style="position:absolute;left:519px;top:609px;width:30px;height:30px;background:#efedf8;"></div><div style="position:absolute;left:550px;top:609px;width:30px;height:30px;background:#efedf8;"></div><div style="position:absolute;left:581px;top:609px;width:30px;height:30px;background:#efedf8;"></div><div style="position:absolute;left:612px;top:609px;width:30px;height:30px;background:#efedf8;"></div><div style="position:absolute;left:705px;top:609px;width:30px;height:30px;background:#b3abee;"></div><div style="position:absolute;left:736px;top:609px;width:30px;height:30px;background:#b3abee;"></div><div style="position:absolute;left:767px;top:609px;width:30px;height:30px;background:#b3abee;"></div><div style="position:absolute;left:798px;top:609px;width:30px;height:30px;background:#b3abee;"></div><div style="position:absolute;left:829px;top:609px;width:30px;height:30px;background:#b3abee;"></div><div style="position:absolute;left:922px;top:609px;width:30px;height:30px;background:#b3abee;"></div><div style="position:absolute;left:953px;top:609px;width:30px;height:30px;background:#b3abee;"></div><div style="position:absolute;left:984px;top:609px;width:30px;height:30px;background:#b3abee;"></div><div style="position:absolute;left:1015px;top:609px;width:30px;height:30px;background:#b3abee;"></div><div style="position:absolute;left:116px;top:640px;width:30px;height:30px;background:#efedf8;"></div><div style="position:absolute;left:147px;top:640px;width:30px;height:30px;background:#efedf8;"></div><div style="position:absolute;left:178px;top:640px;width:30px;height:30px;background:#efedf8;"></div><div style="position:absolute;left:271px;top:640px;width:30px;height:30px;background:#efedf8;"></div><div style="position:absolute;left:302px;top:640px;width:30px;height:30px;background:#efedf8;"></div><div style="position:absolute;left:333px;top:640px;width:30px;height:30px;background:#efedf8;"></div><div style="position:absolute;left:364px;top:640px;width:30px;height:30px;background:#efedf8;"></div><div style="position:absolute;left:395px;top:640px;width:30px;height:30px;background:#efedf8;"></div><div style="position:absolute;left:488px;top:640px;width:30px;height:30px;background:#efedf8;"></div><div style="position:absolute;left:519px;top:640px;width:30px;height:30px;background:#efedf8;"></div><div style="position:absolute;left:550px;top:640px;width:30px;height:30px;background:#efedf8;"></div><div style="position:absolute;left:581px;top:640px;width:30px;height:30px;background:#efedf8;"></div><div style="position:absolute;left:612px;top:640px;width:30px;height:30px;background:#efedf8;"></div><div style="position:absolute;left:705px;top:640px;width:30px;height:30px;background:#b3abee;"></div><div style="position:absolute;left:736px;top:640px;width:30px;height:30px;background:#b3abee;"></div><div style="position:absolute;left:767px;top:640px;width:30px;height:30px;background:#b3abee;"></div><div style="position:absolute;left:798px;top:640px;width:30px;height:30px;background:#b3abee;"></div><div style="position:absolute;left:829px;top:640px;width:30px;height:30px;background:#b3abee;"></div><div style="position:absolute;left:922px;top:640px;width:30px;height:30px;background:#b3abee;"></div><div style="position:absolute;left:953px;top:640px;width:30px;height:30px;background:#b3abee;"></div><div style="position:absolute;left:984px;top:640px;width:30px;height:30px;background:#b3abee;"></div><div style="position:absolute;left:1015px;top:640px;width:30px;height:30px;background:#b3abee;"></div><div style="position:absolute;left:115px;top:423px;width:1px;height:238px;background:#dedede;"></div><div style="position:absolute;left:146px;top:423px;width:1px;height:238px;background:#dedede;"></div><div style="position:absolute;left:146px;top:371px;width:1px;height:52px;background:#e4e4e4;"></div><div style="position:absolute;left:177px;top:423px;width:1px;height:238px;background:#dedede;"></div><div style="position:absolute;left:177px;top:371px;width:1px;height:52px;background:#e4e4e4;"></div><div style="position:absolute;left:208px;top:423px;width:1px;height:238px;background:#dedede;"></div><div style="position:absolute;left:208px;top:371px;width:1px;height:52px;background:#e4e4e4;"></div><div style="position:absolute;left:239px;top:423px;width:1px;height:238px;background:#dedede;"></div><div style="position:absolute;left:239px;top:371px;width:1px;height:52px;background:#e4e4e4;"></div><div style="position:absolute;left:270px;top:423px;width:1px;height:238px;background:#b0b0b0;"></div><div style="position:absolute;left:270px;top:371px;width:1px;height:52px;background:#e4e4e4;"></div><div style="position:absolute;left:301px;top:423px;width:1px;height:238px;background:#dedede;"></div><div style="position:absolute;left:301px;top:371px;width:1px;height:52px;background:#e4e4e4;"></div><div style="position:absolute;left:332px;top:423px;width:1px;height:238px;background:#dedede;"></div><div style="position:absolute;left:332px;top:371px;width:1px;height:52px;background:#e4e4e4;"></div><div style="position:absolute;left:363px;top:423px;width:1px;height:238px;background:#dedede;"></div><div style="position:absolute;left:363px;top:371px;width:1px;height:52px;background:#e4e4e4;"></div><div style="position:absolute;left:394px;top:423px;width:1px;height:238px;background:#dedede;"></div><div style="position:absolute;left:394px;top:371px;width:1px;height:52px;background:#e4e4e4;"></div><div style="position:absolute;left:425px;top:423px;width:1px;height:238px;background:#dedede;"></div><div style="position:absolute;left:425px;top:371px;width:1px;height:52px;background:#e4e4e4;"></div><div style="position:absolute;left:456px;top:423px;width:1px;height:238px;background:#dedede;"></div><div style="position:absolute;left:456px;top:371px;width:1px;height:52px;background:#e4e4e4;"></div><div style="position:absolute;left:487px;top:423px;width:1px;height:238px;background:#b0b0b0;"></div><div style="position:absolute;left:487px;top:371px;width:1px;height:52px;background:#e4e4e4;"></div><div style="position:absolute;left:518px;top:423px;width:1px;height:238px;background:#dedede;"></div><div style="position:absolute;left:518px;top:371px;width:1px;height:52px;background:#e4e4e4;"></div><div style="position:absolute;left:549px;top:423px;width:1px;height:238px;background:#dedede;"></div><div style="position:absolute;left:549px;top:371px;width:1px;height:52px;background:#e4e4e4;"></div><div style="position:absolute;left:580px;top:423px;width:1px;height:238px;background:#dedede;"></div><div style="position:absolute;left:580px;top:371px;width:1px;height:52px;background:#e4e4e4;"></div><div style="position:absolute;left:611px;top:423px;width:1px;height:238px;background:#dedede;"></div><div style="position:absolute;left:611px;top:371px;width:1px;height:52px;background:#e4e4e4;"></div><div style="position:absolute;left:642px;top:423px;width:1px;height:238px;background:#dedede;"></div><div style="position:absolute;left:642px;top:371px;width:1px;height:52px;background:#e4e4e4;"></div><div style="position:absolute;left:673px;top:423px;width:1px;height:238px;background:#dedede;"></div><div style="position:absolute;left:673px;top:371px;width:1px;height:52px;background:#e4e4e4;"></div><div style="position:absolute;left:704px;top:423px;width:1px;height:238px;background:#b0b0b0;"></div><div style="position:absolute;left:704px;top:371px;width:1px;height:52px;background:#e4e4e4;"></div><div style="position:absolute;left:735px;top:423px;width:1px;height:238px;background:#dedede;"></div><div style="position:absolute;left:735px;top:371px;width:1px;height:52px;background:#e4e4e4;"></div><div style="position:absolute;left:766px;top:423px;width:1px;height:238px;background:#dedede;"></div><div style="position:absolute;left:766px;top:371px;width:1px;height:52px;background:#e4e4e4;"></div><div style="position:absolute;left:797px;top:423px;width:1px;height:238px;background:#dedede;"></div><div style="position:absolute;left:797px;top:371px;width:1px;height:52px;background:#e4e4e4;"></div><div style="position:absolute;left:828px;top:423px;width:1px;height:238px;background:#dedede;"></div><div style="position:absolute;left:828px;top:371px;width:1px;height:52px;background:#e4e4e4;"></div><div style="position:absolute;left:859px;top:423px;width:1px;height:238px;background:#dedede;"></div><div style="position:absolute;left:859px;top:371px;width:1px;height:52px;background:#e4e4e4;"></div><div style="position:absolute;left:890px;top:423px;width:1px;height:238px;background:#dedede;"></div><div style="position:absolute;left:890px;top:371px;width:1px;height:52px;background:#e4e4e4;"></div><div style="position:absolute;left:921px;top:423px;width:1px;height:238px;background:#b0b0b0;"></div><div style="position:absolute;left:921px;top:371px;width:1px;height:52px;background:#e4e4e4;"></div><div style="position:absolute;left:952px;top:423px;width:1px;height:238px;background:#dedede;"></div><div style="position:absolute;left:952px;top:371px;width:1px;height:52px;background:#e4e4e4;"></div><div style="position:absolute;left:983px;top:423px;width:1px;height:238px;background:#dedede;"></div><div style="position:absolute;left:983px;top:371px;width:1px;height:52px;background:#e4e4e4;"></div><div style="position:absolute;left:1014px;top:423px;width:1px;height:238px;background:#dedede;"></div><div style="position:absolute;left:1014px;top:371px;width:1px;height:52px;background:#e4e4e4;"></div><div style="position:absolute;left:1045px;top:423px;width:1px;height:238px;background:#dedede;"></div><div style="position:absolute;left:1045px;top:371px;width:1px;height:52px;background:#e4e4e4;"></div><div style="position:absolute;left:1076px;top:423px;width:1px;height:238px;background:#dedede;"></div><div style="position:absolute;left:1076px;top:371px;width:1px;height:52px;background:#e4e4e4;"></div><div style="position:absolute;left:1px;top:422px;width:1076px;height:1px;background:#dedede;"></div><div style="position:absolute;left:1px;top:453px;width:1076px;height:1px;background:#dedede;"></div><div style="position:absolute;left:1px;top:484px;width:1076px;height:1px;background:#dedede;"></div><div style="position:absolute;left:1px;top:515px;width:1076px;height:1px;background:#dedede;"></div><div style="position:absolute;left:1px;top:546px;width:1076px;height:1px;background:#dedede;"></div><div style="position:absolute;left:1px;top:577px;width:1076px;height:1px;background:#dedede;"></div><div style="position:absolute;left:1px;top:608px;width:1076px;height:1px;background:#dedede;"></div><div style="position:absolute;left:1px;top:639px;width:1076px;height:1px;background:#dedede;"></div><div style="position:absolute;left:1px;top:670px;width:1076px;height:1px;background:#dedede;"></div><div style="position:absolute;left:115px;top:371px;width:1px;height:52px;background:#dcdcdc;"></div><div style="position:absolute;left:1077px;top:371px;width:3px;height:290px;background:#fff;"></div><div style="position:absolute;left:1080px;top:371px;width:326px;height:290px;background:#f0f0f0;"></div><div style="position:absolute;left:1081px;top:403px;width:15px;height:198px;background:#c8c8c8;"></div><svg style="left:1082.5px;top:386px" width="13" height="9" viewBox="0 0 13 9"><path d="M1 8L6.5 2.2L12 8" fill="none" stroke="#444" stroke-width="2.4"/></svg><svg style="left:1082.5px;top:637px" width="13" height="9" viewBox="0 0 13 9"><path d="M1 1L6.5 6.8L12 1" fill="none" stroke="#444" stroke-width="2.4"/></svg><div style="position:absolute;left:1117px;top:415px;width:24px;height:24px;background:#0078d7;border:1px solid #e0e0e0;"></div><div style="position:absolute;left:1117px;top:452px;width:24px;height:24px;background:#b3abee;border:1px solid #e0e0e0;"></div><div style="position:absolute;left:1117px;top:489px;width:24px;height:24px;background:#efedf8;border:1px solid #e0e0e0;"></div><div style="position:absolute;left:1117px;top:526px;width:24px;height:24px;background:#fff;border:1px solid #e0e0e0;"></div>
<!-- protokoll -->
<div style="position:absolute;left:0px;top:661px;width:1407px;height:36px;background:#dfe8f5;"></div><div style="position:absolute;left:689px;top:663px;width:2px;height:2px;background:#484848;"></div><div style="position:absolute;left:693px;top:663px;width:2px;height:2px;background:#484848;"></div><div style="position:absolute;left:697px;top:663px;width:2px;height:2px;background:#484848;"></div><div style="position:absolute;left:701px;top:663px;width:2px;height:2px;background:#484848;"></div><div style="position:absolute;left:705px;top:663px;width:2px;height:2px;background:#484848;"></div><div style="position:absolute;left:709px;top:663px;width:2px;height:2px;background:#484848;"></div><div style="position:absolute;left:713px;top:663px;width:2px;height:2px;background:#484848;"></div><div style="position:absolute;left:717px;top:663px;width:2px;height:2px;background:#484848;"></div><div style="position:absolute;left:1px;top:696px;width:1405px;height:34px;border:1px solid #a9bcd6;border-top-color:#b5c5db;border-bottom-color:#9fb2cc;background:linear-gradient(#f5fafe 0,#f5fafe 13px,#ebf3fc 13px,#ebf3fc 22px,#e4f0fb 22px,#e4f0fb 100%);"></div><div style="position:absolute;left:7px;top:701.7px;width:2px;height:2px;background:#4a7fd0;"></div><div style="position:absolute;left:7px;top:705.7px;width:2px;height:2px;background:#4a7fd0;"></div><div style="position:absolute;left:7px;top:709.7px;width:2px;height:2px;background:#4a7fd0;"></div><div style="position:absolute;left:7px;top:713.7px;width:2px;height:2px;background:#4a7fd0;"></div><div style="position:absolute;left:7px;top:717.7px;width:2px;height:2px;background:#4a7fd0;"></div><div style="position:absolute;left:7px;top:721.7px;width:2px;height:2px;background:#4a7fd0;"></div><div style="position:absolute;left:43px;top:702px;width:1px;height:22px;background:#b4c3d9;"></div><div style="position:absolute;left:109px;top:702px;width:1px;height:22px;background:#b4c3d9;"></div><div style="position:absolute;left:145px;top:702px;width:1px;height:22px;background:#b4c3d9;"></div><div style="position:absolute;left:211px;top:702px;width:1px;height:22px;background:#b4c3d9;"></div><svg style="left:18px;top:705px" width="16" height="16" viewBox="0 0 16 16"><path d="M0.6 6V0.6H15.4V15.4H8.4" fill="none" stroke="#333" stroke-width="1.2"/><rect x="0.6" y="9.6" width="5.4" height="5.8" rx="0.6" fill="none" stroke="#333" stroke-width="1.2"/><path d="M7 9L12.6 3.4M8.6 3.2H12.8V7.4" fill="none" stroke="#333" stroke-width="1.2"/></svg><svg style="left:54.4px;top:705.4px" width="15.2" height="15.2" viewBox="0 0 15.2 15.2"><rect x="0.8" y="0.8" width="13.6" height="13.6" rx="1.4" fill="none" stroke="#555" stroke-width="1.5"/><path d="M0.8 3.3H14.4" fill="none" stroke="#555" stroke-width="1.5" stroke-width="1.2"/><path d="M2.9 8.9H12.3M5.4 6.3L2.9 8.9L5.4 11.5M9.8 6.3L12.3 8.9L9.8 11.5" fill="none" stroke="#222" stroke-width="1.3"/></svg><svg style="left:84.4px;top:705.4px" width="15.2" height="15.2" viewBox="0 0 15.2 15.2"><rect x="0.8" y="0.8" width="13.6" height="13.6" rx="1.4" fill="none" stroke="#555" stroke-width="1.5"/><path d="M0.8 3.3H14.4" fill="none" stroke="#555" stroke-width="1.5" stroke-width="1.2"/><path d="M4.6 6L10.6 12M10.6 6L4.6 12" fill="none" stroke="#222" stroke-width="1.5"/></svg><svg style="left:120px;top:705px" width="16" height="16" viewBox="0 0 16 16"><g transform="scale(0.5)"><path d="M26.03 1.69L18.95 8.76L23.34 13.15L30.41 6.07A8.4 8.4 0 0 1 21.29 17.68L10.27 29.41A5.5 5.5 0 0 1 2.53 21.59L14.40 10.71A8.4 8.4 0 0 1 26.03 1.69Z" fill="none" stroke="#222" stroke-width="2.6" stroke-linecap="round" stroke-linejoin="round"/></g></svg><svg style="left:156px;top:704.6px" width="16" height="15" viewBox="0 0 16 15"><path d="M8 1L15 14H1Z" fill="none" stroke="#000" stroke-width="1.7" stroke-linejoin="round"/><path d="M8 5.4V9.6" stroke="#000" stroke-width="1.7" fill="none"/><rect x="7.1" y="10.8" width="1.8" height="1.7" fill="#000"/></svg><svg style="left:187.2px;top:705px" width="14" height="16" viewBox="0 0 14 16"><path d="M2.2 0.6H8.4L12.8 5V14a1.4 1.4 0 0 1-1.4 1.4H2.2A1.4 1.4 0 0 1 0.8 14V2A1.4 1.4 0 0 1 2.2 0.6Z" fill="none" stroke="#444" stroke-width="1.2"/><path d="M8.4 0.8c0 2.6 1.4 4 4.2 4.2" fill="none" stroke="#444" stroke-width="1.2"/><path d="M4.4 5.4V10.2" fill="none" stroke="#444" stroke-width="1.2"/><rect x="3.8" y="11.4" width="1.2" height="1.2" fill="#444"/></svg><svg style="left:222px;top:705px" width="16" height="16" viewBox="0 0 16 16"><circle cx="8" cy="8" r="7.4" fill="none" stroke="#333" stroke-width="1.2"/><path d="M5.4 6.2a2.7 2.7 0 1 1 4.4 2c-1.1 0.9-1.7 1.4-1.7 2.6" fill="none" stroke="#333" stroke-width="1.2"/><rect x="7.5" y="11.8" width="1.2" height="1.2" fill="#333"/></svg><div style="position:absolute;left:1px;top:730px;width:1405px;height:83px;background:#fff;"></div><div style="position:absolute;left:1px;top:753px;width:1405px;height:1px;background:#ececec;"></div><div style="position:absolute;left:1px;top:777px;width:1405px;height:1px;background:#ececec;"></div><div style="position:absolute;left:1px;top:801px;width:1405px;height:1px;background:#ececec;"></div><div style="position:absolute;left:137px;top:730px;width:1px;height:83px;background:#ececec;"></div>
<!-- status bar -->
<div style="position:absolute;left:0px;top:813px;width:1407px;height:23px;border-top:1px solid #7896bd;background:linear-gradient(#f2f7fc 0,#f2f7fc 1px,#d6e3f3 1px,#c4d3e7 11px,#b5c7df 100%);"></div><div style="position:absolute;left:1318px;top:815px;width:1px;height:19px;background:#8a9cb8;"></div><div style="position:absolute;left:1319px;top:815px;width:1px;height:19px;background:#f4f8fc;"></div><div style="position:absolute;left:1402px;top:821px;width:2px;height:2px;background:#8ea4c8;"></div><div style="position:absolute;left:1398px;top:825px;width:2px;height:2px;background:#8ea4c8;"></div><div style="position:absolute;left:1402px;top:825px;width:2px;height:2px;background:#8ea4c8;"></div><div style="position:absolute;left:1394px;top:829px;width:2px;height:2px;background:#8ea4c8;"></div><div style="position:absolute;left:1398px;top:829px;width:2px;height:2px;background:#8ea4c8;"></div><div style="position:absolute;left:1402px;top:829px;width:2px;height:2px;background:#8ea4c8;"></div><div style="position:absolute;left:0px;top:0px;width:1407px;height:836px;border:1px solid #9c9c9c;border-top-color:#a8a8a8;border-radius:8px;pointer-events:none;"></div>
<span class="t" style="left:30.70px;top:10.00px;font-size:12px;color:#000;transform:scaleX(0.9647);">AllSync Scheduler 4.3.2 - Business Edition</span>
<span class="t" style="left:12.70px;top:39.00px;font-size:15px;color:#000;transform:scaleX(0.9741);">Scheduler</span>
<span class="t" style="left:93.70px;top:39.00px;font-size:15px;color:#000;transform:scaleX(0.9240);">Task</span>
<span class="t" style="left:138.70px;top:39.00px;font-size:15px;color:#000;transform:scaleX(0.9918);">Ansicht</span>
<span class="t" style="left:202.70px;top:39.00px;font-size:15px;color:#000;transform:scaleX(0.9887);">Spalten</span>
<span class="t" style="left:268.70px;top:39.00px;font-size:15px;color:#000;transform:scaleX(1.0134);">Tools</span>
<span class="t" style="left:320.30px;top:39.00px;font-size:15px;color:#000;transform:scaleX(0.9109);">?</span>
<span class="t" style="left:9.70px;top:103.00px;font-size:15px;color:#1e395b;transform:scaleX(1.0143);">Aktivieren</span>
<span class="t" style="left:85.70px;top:103.00px;font-size:15px;color:#8b8b8b;transform:scaleX(1.0051);">Deaktivieren</span>
<span class="t" style="left:178.70px;top:103.00px;font-size:15px;color:#1e395b;transform:scaleX(0.9959);">Kalender</span>
<span class="t" style="left:247.70px;top:103.00px;font-size:15px;color:#1e395b;transform:scaleX(1.0134);">Starttermine</span>
<span class="t" style="left:339.70px;top:103.00px;font-size:15px;color:#8b8b8b;">Fortschritt</span>
<span class="t" style="left:431.70px;top:103.00px;font-size:15px;color:#1e395b;transform:scaleX(1.0098);">Neu</span>
<span class="t" style="left:479.70px;top:103.00px;font-size:15px;color:#1e395b;">Bearbeiten</span>
<span class="t" style="left:561.70px;top:103.00px;font-size:15px;color:#1e395b;transform:scaleX(1.0247);">Protokoll</span>
<span class="t" style="left:645.70px;top:103.00px;font-size:15px;color:#1e395b;">Start</span>
<span class="t" style="left:700.70px;top:103.00px;font-size:15px;color:#8b8b8b;transform:scaleX(0.8884);">Pause</span>
<span class="t" style="left:760.70px;top:103.00px;font-size:15px;color:#8b8b8b;transform:scaleX(1.0629);">Stop</span>
<span class="t" style="left:817.70px;top:103.00px;font-size:15px;color:#1e395b;transform:scaleX(1.0314);">Optionen</span>
<span class="t" style="left:889.70px;top:103.00px;font-size:15px;color:#1e395b;transform:scaleX(0.9398);">Fenster</span>
<span class="t" style="left:953.70px;top:103.00px;font-size:15px;color:#1e395b;transform:scaleX(1.0247);">Protokoll</span>
<span class="t" style="left:1029.70px;top:103.00px;font-size:15px;color:#1e395b;transform:scaleX(0.9754);">AllSync</span>
<span class="t" style="left:1090.70px;top:103.00px;font-size:15px;color:#1e395b;transform:scaleX(1.0063);">Dienst</span>
<span class="t" style="left:1159.70px;top:103.00px;font-size:15px;color:#1e395b;transform:scaleX(1.0928);">Hilfe</span>
<span class="t" style="left:1215.70px;top:103.00px;font-size:15px;color:#1e395b;transform:scaleX(0.9790);">Beenden</span>
<span class="t" style="left:6.00px;top:129.00px;font-size:13px;color:#000;">Task</span>
<span class="t" style="left:153.70px;top:129.00px;font-size:13px;color:#000;transform:scaleX(1.0158);">Startart</span>
<span class="t" style="left:238.70px;top:129.00px;font-size:13px;color:#000;">Startzeit</span>
<span class="t" style="left:371.80px;top:129.00px;font-size:13px;color:#000;transform:scaleX(1.0266);">Startoptionen</span>
<span class="t" style="left:552.70px;top:129.00px;font-size:13px;color:#000;transform:scaleX(1.0098);">Zeitabstand</span>
<span class="t" style="left:635.90px;top:129.00px;font-size:13px;color:#000;transform:scaleX(1.0338);">Toleranz</span>
<span class="t" style="left:701.10px;top:129.00px;font-size:13px;color:#000;">Nächster Start</span>
<span class="t" style="left:829.90px;top:129.00px;font-size:13px;color:#000;transform:scaleX(0.9942);">Letzter Start</span>
<span class="t" style="left:963.20px;top:129.00px;font-size:13px;color:#000;transform:scaleX(0.9660);">Laufzeit</span>
<span class="t" style="left:1026.00px;top:129.00px;font-size:13px;color:#000;transform:scaleX(0.9930);">Profile</span>
<span class="t" style="left:42.90px;top:154.00px;font-size:13px;color:#000;transform:scaleX(0.9919);">Master Backup</span>
<span class="t" style="left:153.70px;top:154.00px;font-size:13px;color:#000;transform:scaleX(1.0316);">Monatlich</span>
<span class="t" style="left:238.70px;top:154.00px;font-size:13px;color:#000;transform:scaleX(0.9648);">22:30</span>
<span class="t" style="left:371.80px;top:154.00px;font-size:13px;color:#000;transform:scaleX(0.9497);">Jan-Dez ...</span>
<span class="t" style="left:552.70px;top:154.00px;font-size:13px;color:#000;transform:scaleX(1.1050);">-</span>
<span class="t" style="left:635.90px;top:154.00px;font-size:13px;color:#000;transform:scaleX(0.9544);">00:05:00</span>
<span class="t" style="left:701.10px;top:154.00px;font-size:13px;color:#000;transform:scaleX(0.9549);">30.04.2026 22:30:00</span>
<span class="t" style="left:829.90px;top:154.00px;font-size:13px;color:#000;transform:scaleX(1.1050);">-</span>
<span class="t" style="left:1026.00px;top:154.00px;font-size:13px;color:#000;transform:scaleX(0.9733);">1) Pro1</span>
<span class="t" style="left:42.90px;top:178.00px;font-size:13px;color:#000;transform:scaleX(0.9850);">Office NAS</span>
<span class="t" style="left:153.70px;top:178.00px;font-size:13px;color:#000;transform:scaleX(0.9914);">Wöchentlich</span>
<span class="t" style="left:238.70px;top:178.00px;font-size:13px;color:#000;transform:scaleX(0.9648);">08:00</span>
<span class="t" style="left:371.80px;top:178.00px;font-size:13px;color:#000;transform:scaleX(1.0470);">Mo-Fr</span>
<span class="t" style="left:552.70px;top:178.00px;font-size:13px;color:#000;transform:scaleX(1.1050);">-</span>
<span class="t" style="left:635.90px;top:178.00px;font-size:13px;color:#000;transform:scaleX(0.9544);">00:05:00</span>
<span class="t" style="left:701.10px;top:178.00px;font-size:13px;color:#000;transform:scaleX(0.9549);">20.04.2026 08:00:00</span>
<span class="t" style="left:829.90px;top:178.00px;font-size:13px;color:#000;transform:scaleX(1.1050);">-</span>
<span class="t" style="left:963.20px;top:178.00px;font-size:13px;color:#000;transform:scaleX(1.1050);">-</span>
<span class="t" style="left:1026.00px;top:178.00px;font-size:13px;color:#000;transform:scaleX(0.9502);">Pro1</span>
<span class="t" style="left:42.90px;top:202.00px;font-size:13px;color:#000;transform:scaleX(0.9617);">Server Backup</span>
<span class="t" style="left:153.70px;top:202.00px;font-size:13px;color:#000;transform:scaleX(0.9914);">Wöchentlich</span>
<span class="t" style="left:238.70px;top:202.00px;font-size:13px;color:#000;transform:scaleX(0.9648);">01:00</span>
<span class="t" style="left:371.80px;top:202.00px;font-size:13px;color:#000;transform:scaleX(1.0470);">Mo-Fr</span>
<span class="t" style="left:552.70px;top:202.00px;font-size:13px;color:#000;transform:scaleX(1.1050);">-</span>
<span class="t" style="left:635.90px;top:202.00px;font-size:13px;color:#000;transform:scaleX(0.9544);">00:05:00</span>
<span class="t" style="left:701.10px;top:202.00px;font-size:13px;color:#000;transform:scaleX(0.9549);">20.04.2026 01:00:00</span>
<span class="t" style="left:829.90px;top:202.00px;font-size:13px;color:#000;transform:scaleX(1.1050);">-</span>
<span class="t" style="left:963.20px;top:202.00px;font-size:13px;color:#000;transform:scaleX(1.1050);">-</span>
<span class="t" style="left:1026.00px;top:202.00px;font-size:13px;color:#000;transform:scaleX(0.9502);">Pro1</span>
<span class="t" style="left:42.90px;top:226.00px;font-size:13px;color:#000;transform:scaleX(0.9518);">Server Sync</span>
<span class="t" style="left:153.70px;top:226.00px;font-size:13px;color:#000;transform:scaleX(0.9949);">Intervall</span>
<span class="t" style="left:238.70px;top:226.00px;font-size:13px;color:#000;transform:scaleX(0.9866);">09:00 - 23:50</span>
<span class="t" style="left:371.80px;top:226.00px;font-size:13px;color:#000;transform:scaleX(1.0470);">Mo-Fr</span>
<span class="t" style="left:552.70px;top:226.00px;font-size:13px;color:#000;transform:scaleX(0.9583);">01:00:00</span>
<span class="t" style="left:635.90px;top:226.00px;font-size:13px;color:#000;transform:scaleX(0.9544);">00:05:00</span>
<span class="t" style="left:701.10px;top:226.00px;font-size:13px;color:#000;transform:scaleX(0.9549);">20.04.2026 09:00:00</span>
<span class="t" style="left:829.90px;top:226.00px;font-size:13px;color:#000;transform:scaleX(1.1050);">-</span>
<span class="t" style="left:1026.00px;top:226.00px;font-size:13px;color:#000;transform:scaleX(0.9502);">Pro1</span>
<span class="t" style="left:42.90px;top:250.00px;font-size:13px;color:#000;transform:scaleX(0.9383);">TXT Backup</span>
<span class="t" style="left:153.70px;top:250.00px;font-size:13px;color:#000;transform:scaleX(0.9914);">Wöchentlich</span>
<span class="t" style="left:238.70px;top:250.00px;font-size:13px;color:#000;transform:scaleX(0.9648);">21:30</span>
<span class="t" style="left:371.80px;top:250.00px;font-size:13px;color:#000;transform:scaleX(1.0470);">Mo-Fr</span>
<span class="t" style="left:552.70px;top:250.00px;font-size:13px;color:#000;transform:scaleX(1.1050);">-</span>
<span class="t" style="left:635.90px;top:250.00px;font-size:13px;color:#000;transform:scaleX(0.9544);">00:05:00</span>
<span class="t" style="left:701.10px;top:250.00px;font-size:13px;color:#000;transform:scaleX(0.9549);">20.04.2026 21:30:00</span>
<span class="t" style="left:829.90px;top:250.00px;font-size:13px;color:#000;transform:scaleX(1.1050);">-</span>
<span class="t" style="left:963.20px;top:250.00px;font-size:13px;color:#000;transform:scaleX(1.1050);">-</span>
<span class="t" style="left:1026.00px;top:250.00px;font-size:13px;color:#000;transform:scaleX(0.9502);">Pro1</span>
<span class="t" style="left:42.90px;top:274.00px;font-size:13px;color:#000;transform:scaleX(0.8996);">USB Sync</span>
<span class="t" style="left:153.70px;top:274.00px;font-size:13px;color:#000;transform:scaleX(1.0398);">Verbindung</span>
<span class="t" style="left:238.70px;top:274.00px;font-size:13px;color:#000;transform:scaleX(1.1050);">-</span>
<span class="t" style="left:371.80px;top:274.00px;font-size:13px;color:#000;transform:scaleX(1.0546);">Z:\</span>
<span class="t" style="left:552.70px;top:274.00px;font-size:13px;color:#000;transform:scaleX(1.1050);">-</span>
<span class="t" style="left:635.90px;top:274.00px;font-size:13px;color:#000;transform:scaleX(1.1050);">-</span>
<span class="t" style="left:829.90px;top:274.00px;font-size:13px;color:#000;transform:scaleX(1.1050);">-</span>
<span class="t" style="left:1026.00px;top:274.00px;font-size:13px;color:#000;transform:scaleX(0.9502);">Pro1</span>
<span class="t" style="left:42.90px;top:298.00px;font-size:13px;color:#fff;transform:scaleX(0.9838);">Windows Backup</span>
<span class="t" style="left:153.70px;top:298.00px;font-size:13px;color:#fff;transform:scaleX(1.0316);">Monatlich</span>
<span class="t" style="left:238.70px;top:298.00px;font-size:13px;color:#fff;transform:scaleX(0.9648);">03:00</span>
<span class="t" style="left:371.80px;top:298.00px;font-size:13px;color:#fff;">Jan-Mär,Mai-Sep,Nov-Dez ...</span>
<span class="t" style="left:552.70px;top:298.00px;font-size:13px;color:#fff;transform:scaleX(1.1050);">-</span>
<span class="t" style="left:635.90px;top:298.00px;font-size:13px;color:#fff;transform:scaleX(0.9544);">00:05:00</span>
<span class="t" style="left:701.10px;top:298.00px;font-size:13px;color:#fff;transform:scaleX(0.9549);">01.05.2026 03:00:00</span>
<span class="t" style="left:829.90px;top:298.00px;font-size:13px;color:#fff;transform:scaleX(1.1050);">-</span>
<span class="t" style="left:1026.00px;top:298.00px;font-size:13px;color:#fff;transform:scaleX(0.9502);">Pro1</span>
<span class="t" style="left:71.10px;top:348.00px;font-size:12px;color:#000;transform:scaleX(0.9138);">2026</span>
<span class="t" style="left:186.90px;top:348.00px;font-size:12px;color:#000;transform:scaleX(1.0368);">April</span>
<span class="t" style="left:350.30px;top:348.00px;font-size:12px;color:#000;transform:scaleX(0.9152);">100%</span>
<span class="t" style="left:124.90px;top:380.75px;font-size:12.5px;color:#000;">Mi</span>
<span class="t" style="left:126.80px;top:399.50px;font-size:16px;color:#000;transform:scaleX(0.9881);">1</span>
<span class="t" style="left:154.51px;top:380.75px;font-size:12.5px;color:#000;">Do</span>
<span class="t" style="left:157.80px;top:399.50px;font-size:16px;color:#000;transform:scaleX(0.9881);">2</span>
<span class="t" style="left:187.59px;top:380.75px;font-size:12.5px;color:#000;">Fr</span>
<span class="t" style="left:188.80px;top:399.50px;font-size:16px;color:#000;transform:scaleX(0.9881);">3</span>
<span class="t" style="left:216.85px;top:380.75px;font-size:12.5px;color:#dc6b3f;">Sa</span>
<span class="t" style="left:219.80px;top:399.50px;font-size:16px;color:#dc6b3f;transform:scaleX(0.9881);">4</span>
<span class="t" style="left:247.85px;top:380.75px;font-size:12.5px;color:#dc6b3f;">So</span>
<span class="t" style="left:250.80px;top:399.50px;font-size:16px;color:#dc6b3f;transform:scaleX(0.9881);">5</span>
<span class="t" style="left:277.81px;top:380.75px;font-size:12.5px;color:#000;">Mo</span>
<span class="t" style="left:281.80px;top:399.50px;font-size:16px;color:#000;transform:scaleX(0.9881);">6</span>
<span class="t" style="left:311.59px;top:380.75px;font-size:12.5px;color:#000;">Di</span>
<span class="t" style="left:312.80px;top:399.50px;font-size:16px;color:#000;transform:scaleX(0.9881);">7</span>
<span class="t" style="left:341.90px;top:380.75px;font-size:12.5px;color:#000;">Mi</span>
<span class="t" style="left:343.80px;top:399.50px;font-size:16px;color:#000;transform:scaleX(0.9881);">8</span>
<span class="t" style="left:371.51px;top:380.75px;font-size:12.5px;color:#000;">Do</span>
<span class="t" style="left:374.80px;top:399.50px;font-size:16px;color:#000;transform:scaleX(0.9881);">9</span>
<span class="t" style="left:404.59px;top:380.75px;font-size:12.5px;color:#000;">Fr</span>
<span class="t" style="left:401.60px;top:399.50px;font-size:16px;color:#000;transform:scaleX(0.9665);">10</span>
<span class="t" style="left:433.85px;top:380.75px;font-size:12.5px;color:#dc6b3f;">Sa</span>
<span class="t" style="left:432.60px;top:399.50px;font-size:16px;color:#dc6b3f;transform:scaleX(1.0356);">11</span>
<span class="t" style="left:464.85px;top:380.75px;font-size:12.5px;color:#dc6b3f;">So</span>
<span class="t" style="left:463.60px;top:399.50px;font-size:16px;color:#dc6b3f;transform:scaleX(0.9665);">12</span>
<span class="t" style="left:494.81px;top:380.75px;font-size:12.5px;color:#000;">Mo</span>
<span class="t" style="left:494.60px;top:399.50px;font-size:16px;color:#000;transform:scaleX(0.9665);">13</span>
<span class="t" style="left:528.59px;top:380.75px;font-size:12.5px;color:#000;">Di</span>
<span class="t" style="left:525.60px;top:399.50px;font-size:16px;color:#000;transform:scaleX(0.9665);">14</span>
<span class="t" style="left:558.90px;top:380.75px;font-size:12.5px;color:#000;">Mi</span>
<span class="t" style="left:556.60px;top:399.50px;font-size:16px;color:#000;transform:scaleX(0.9665);">15</span>
<span class="t" style="left:588.51px;top:380.75px;font-size:12.5px;color:#000;">Do</span>
<span class="t" style="left:587.60px;top:399.50px;font-size:16px;color:#000;transform:scaleX(0.9665);">16</span>
<span class="t" style="left:621.59px;top:380.75px;font-size:12.5px;color:#000;">Fr</span>
<span class="t" style="left:618.60px;top:399.50px;font-size:16px;color:#000;transform:scaleX(0.9665);">17</span>
<span class="t" style="left:650.85px;top:380.75px;font-size:12.5px;color:#1976d2;">Sa</span>
<span class="t" style="left:649.60px;top:399.50px;font-size:16px;color:#1976d2;transform:scaleX(0.9665);">18</span>
<span class="t" style="left:681.85px;top:380.75px;font-size:12.5px;color:#dc6b3f;">So</span>
<span class="t" style="left:680.60px;top:399.50px;font-size:16px;color:#dc6b3f;transform:scaleX(0.9665);">19</span>
<span class="t" style="left:711.81px;top:380.75px;font-size:12.5px;color:#000;">Mo</span>
<span class="t" style="left:711.60px;top:399.50px;font-size:16px;color:#000;transform:scaleX(0.9665);">20</span>
<span class="t" style="left:745.59px;top:380.75px;font-size:12.5px;color:#000;">Di</span>
<span class="t" style="left:742.60px;top:399.50px;font-size:16px;color:#000;transform:scaleX(0.9665);">21</span>
<span class="t" style="left:775.90px;top:380.75px;font-size:12.5px;color:#000;">Mi</span>
<span class="t" style="left:773.60px;top:399.50px;font-size:16px;color:#000;transform:scaleX(0.9665);">22</span>
<span class="t" style="left:805.51px;top:380.75px;font-size:12.5px;color:#000;">Do</span>
<span class="t" style="left:804.60px;top:399.50px;font-size:16px;color:#000;transform:scaleX(0.9665);">23</span>
<span class="t" style="left:838.59px;top:380.75px;font-size:12.5px;color:#000;">Fr</span>
<span class="t" style="left:835.60px;top:399.50px;font-size:16px;color:#000;transform:scaleX(0.9665);">24</span>
<span class="t" style="left:867.85px;top:380.75px;font-size:12.5px;color:#dc6b3f;">Sa</span>
<span class="t" style="left:866.60px;top:399.50px;font-size:16px;color:#dc6b3f;transform:scaleX(0.9665);">25</span>
<span class="t" style="left:898.85px;top:380.75px;font-size:12.5px;color:#dc6b3f;">So</span>
<span class="t" style="left:897.60px;top:399.50px;font-size:16px;color:#dc6b3f;transform:scaleX(0.9665);">26</span>
<span class="t" style="left:928.81px;top:380.75px;font-size:12.5px;color:#000;">Mo</span>
<span class="t" style="left:928.60px;top:399.50px;font-size:16px;color:#000;transform:scaleX(0.9665);">27</span>
<span class="t" style="left:962.59px;top:380.75px;font-size:12.5px;color:#000;">Di</span>
<span class="t" style="left:959.60px;top:399.50px;font-size:16px;color:#000;transform:scaleX(0.9665);">28</span>
<span class="t" style="left:992.90px;top:380.75px;font-size:12.5px;color:#000;">Mi</span>
<span class="t" style="left:990.60px;top:399.50px;font-size:16px;color:#000;transform:scaleX(0.9665);">29</span>
<span class="t" style="left:1022.51px;top:380.75px;font-size:12.5px;color:#000;">Do</span>
<span class="t" style="left:1021.60px;top:399.50px;font-size:16px;color:#000;transform:scaleX(0.9665);">30</span>
<span class="t" style="left:5.20px;top:399.50px;font-size:16px;color:#000;transform:scaleX(0.9664);">Task</span>
<span class="t" style="left:5.20px;top:431.00px;font-size:14px;color:#000;transform:scaleX(0.9728);">Cloud Backup</span>
<span class="t" style="left:5.20px;top:462.00px;font-size:14px;color:#000;transform:scaleX(0.9522);">DOC Backup</span>
<span class="t" style="left:5.20px;top:493.00px;font-size:14px;color:#000;transform:scaleX(0.9704);">Drive Backup</span>
<span class="t" style="left:5.20px;top:524.00px;font-size:14px;color:#000;transform:scaleX(0.9724);">Master Backup</span>
<span class="t" style="left:5.20px;top:555.00px;font-size:14px;color:#000;transform:scaleX(0.9681);">Office NAS</span>
<span class="t" style="left:5.20px;top:586.00px;font-size:14px;color:#000;transform:scaleX(0.9452);">Server Backup</span>
<span class="t" style="left:5.20px;top:617.00px;font-size:14px;color:#000;transform:scaleX(0.9285);">Server Sync</span>
<span class="t" style="left:5.20px;top:648.00px;font-size:14px;color:#000;transform:scaleX(0.9351);">TXT Backup</span>
<span class="t" style="left:1115.10px;top:383.00px;font-size:15px;color:#000;font-weight:bold;transform:scaleX(1.0278);">Legende</span>
<span class="t" style="left:1150.30px;top:420.00px;font-size:14px;color:#000;transform:scaleX(1.0062);">Starttermin Heute</span>
<span class="t" style="left:1150.30px;top:457.00px;font-size:14px;color:#000;transform:scaleX(1.0141);">Künftiger Starttermin</span>
<span class="t" style="left:1150.30px;top:494.00px;font-size:14px;color:#000;">Vergangener Starttermin</span>
<span class="t" style="left:1150.30px;top:531.00px;font-size:14px;color:#000;transform:scaleX(0.9923);">Kein Starttermin</span>
<span class="t" style="left:1115.10px;top:585.00px;font-size:15px;color:#000;font-weight:bold;transform:scaleX(1.0873);">Info</span>
<span class="t" style="left:1115.00px;top:617.00px;font-size:14px;color:#000;transform:scaleX(0.9768);">Bewegen Sie die Maus auf einen Task oder</span>
<span class="t" style="left:1115.00px;top:636.00px;font-size:14px;color:#000;transform:scaleX(0.9802);">Termin für Details...</span>
<span class="t" style="left:9.30px;top:674.00px;font-size:15px;color:#000;transform:scaleX(0.8466);">PROTOKOLL</span>
<span class="t" style="left:7.70px;top:735.00px;font-size:15px;color:#000;transform:scaleX(0.9249);">18.04.2026 10:36:18</span>
<span class="t" style="left:142.70px;top:735.00px;font-size:15px;color:#000;transform:scaleX(0.9658);">AllSync Scheduler 4.3.2 - Business Edition gestartet.</span>
<span class="t" style="left:4.20px;top:818.75px;font-size:12.5px;color:#14246a;transform:scaleX(0.9135);">OK</span>
<span class="t" style="left:1323.10px;top:818.75px;font-size:12.5px;color:#14246a;transform:scaleX(0.8998);">Tasks: 9/10</span>
</div>
</body></html>
